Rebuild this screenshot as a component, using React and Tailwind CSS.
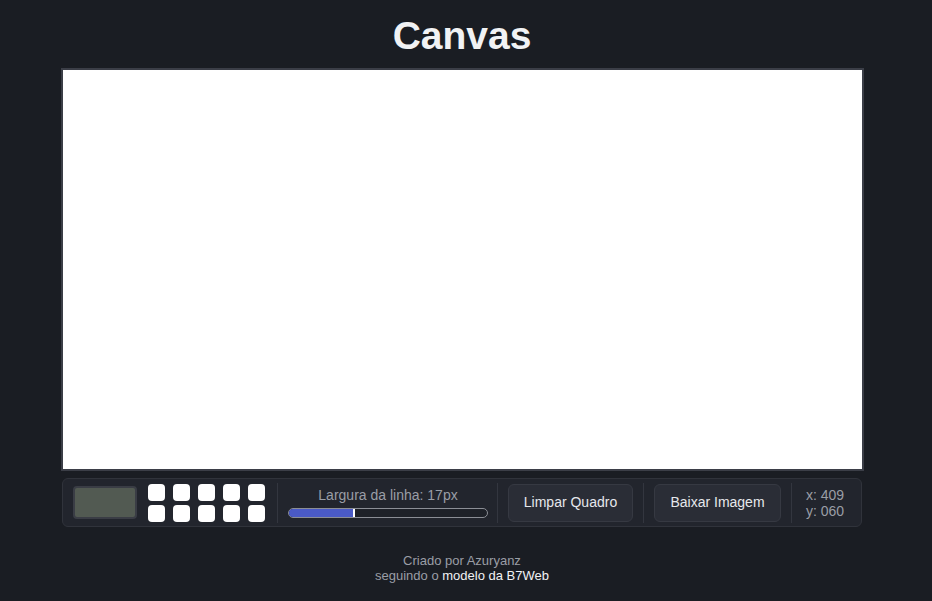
const colors = Array.from({ length: 10 });

const Divider = () => <div className="h-[40px] w-px bg-[#33363f]" />;

const App = () => {
  const lineWidth = 17;
  const pct = 32.5;

  return (
    <div
      className="flex min-h-[601px] flex-col items-center bg-[#1a1d23] pr-[8px]"
      style={{ fontFamily: '"Liberation Sans", Arial, sans-serif' }}
    >
      <h1 className="mt-[16px] text-[39px] font-bold leading-[39px] text-[#f1f2f4]">
        Canvas
      </h1>

      <div className="mt-[13px] h-[403px] w-[803px] border-2 border-[#3b3e47] bg-white" />

      <div className="mt-[7px] flex h-[49px] w-[800px] items-center rounded-md border border-[#30333b] bg-[#22252d] pl-[10px]">
        <div className="h-[33px] w-[64px] rounded-[4px] border-2 border-[#3a3d45] bg-[#525a52]" />

        <div className="ml-[11px] grid grid-cols-5 gap-x-[8px] gap-y-[4px]">
          {colors.map((_, i) => (
            <div key={i} className="h-[17px] w-[17px] rounded-[4px] bg-white" />
          ))}
        </div>

        <div className="ml-[12px]">
          <Divider />
        </div>

        <div className="ml-[10px] flex w-[200px] flex-col items-center">
          <span className="text-[14px] leading-[16px] text-[#9a9ea6]">
            Largura da linha: {lineWidth}px
          </span>
          <div className="relative mt-[5px] h-[10px] w-[200px] overflow-hidden rounded-full border border-[#8b8e95] bg-[#1e2128]">
            <div className="h-full bg-[#4a5ac6]" style={{ width: `${pct}%` }} />
            <div
              className="absolute top-0 h-full w-[2px] bg-white"
              style={{ left: `${pct}%` }}
            />
          </div>
        </div>

        <div className="ml-[9px]">
          <Divider />
        </div>

        <button
          type="button"
          className="ml-[10px] h-[38px] w-[125px] rounded-md border border-[#363942] bg-[#2a2d36] text-[14px] text-[#e6e8ec]"
        >
          Limpar Quadro
        </button>

        <div className="ml-[10px]">
          <Divider />
        </div>

        <button
          type="button"
          className="ml-[10px] h-[38px] w-[127px] rounded-md border border-[#363942] bg-[#2a2d36] text-[14px] text-[#e6e8ec]"
        >
          Baixar Imagem
        </button>

        <div className="ml-[10px]">
          <Divider />
        </div>

        <div className="ml-[14px] flex flex-col text-[14px] leading-[16px] text-[#9a9ea6]">
          <span>x: 409</span>
          <span>y: 060</span>
        </div>
      </div>

      <footer className="mt-[26px] text-center text-[13px] leading-[15px] text-[#9a9ea6]">
        <p>Criado por Azuryanz</p>
        <p>
          seguindo o <span className="text-[#f1f2f4]">modelo da B7Web</span>
        </p>
      </footer>
    </div>
  );
};

export default App;
